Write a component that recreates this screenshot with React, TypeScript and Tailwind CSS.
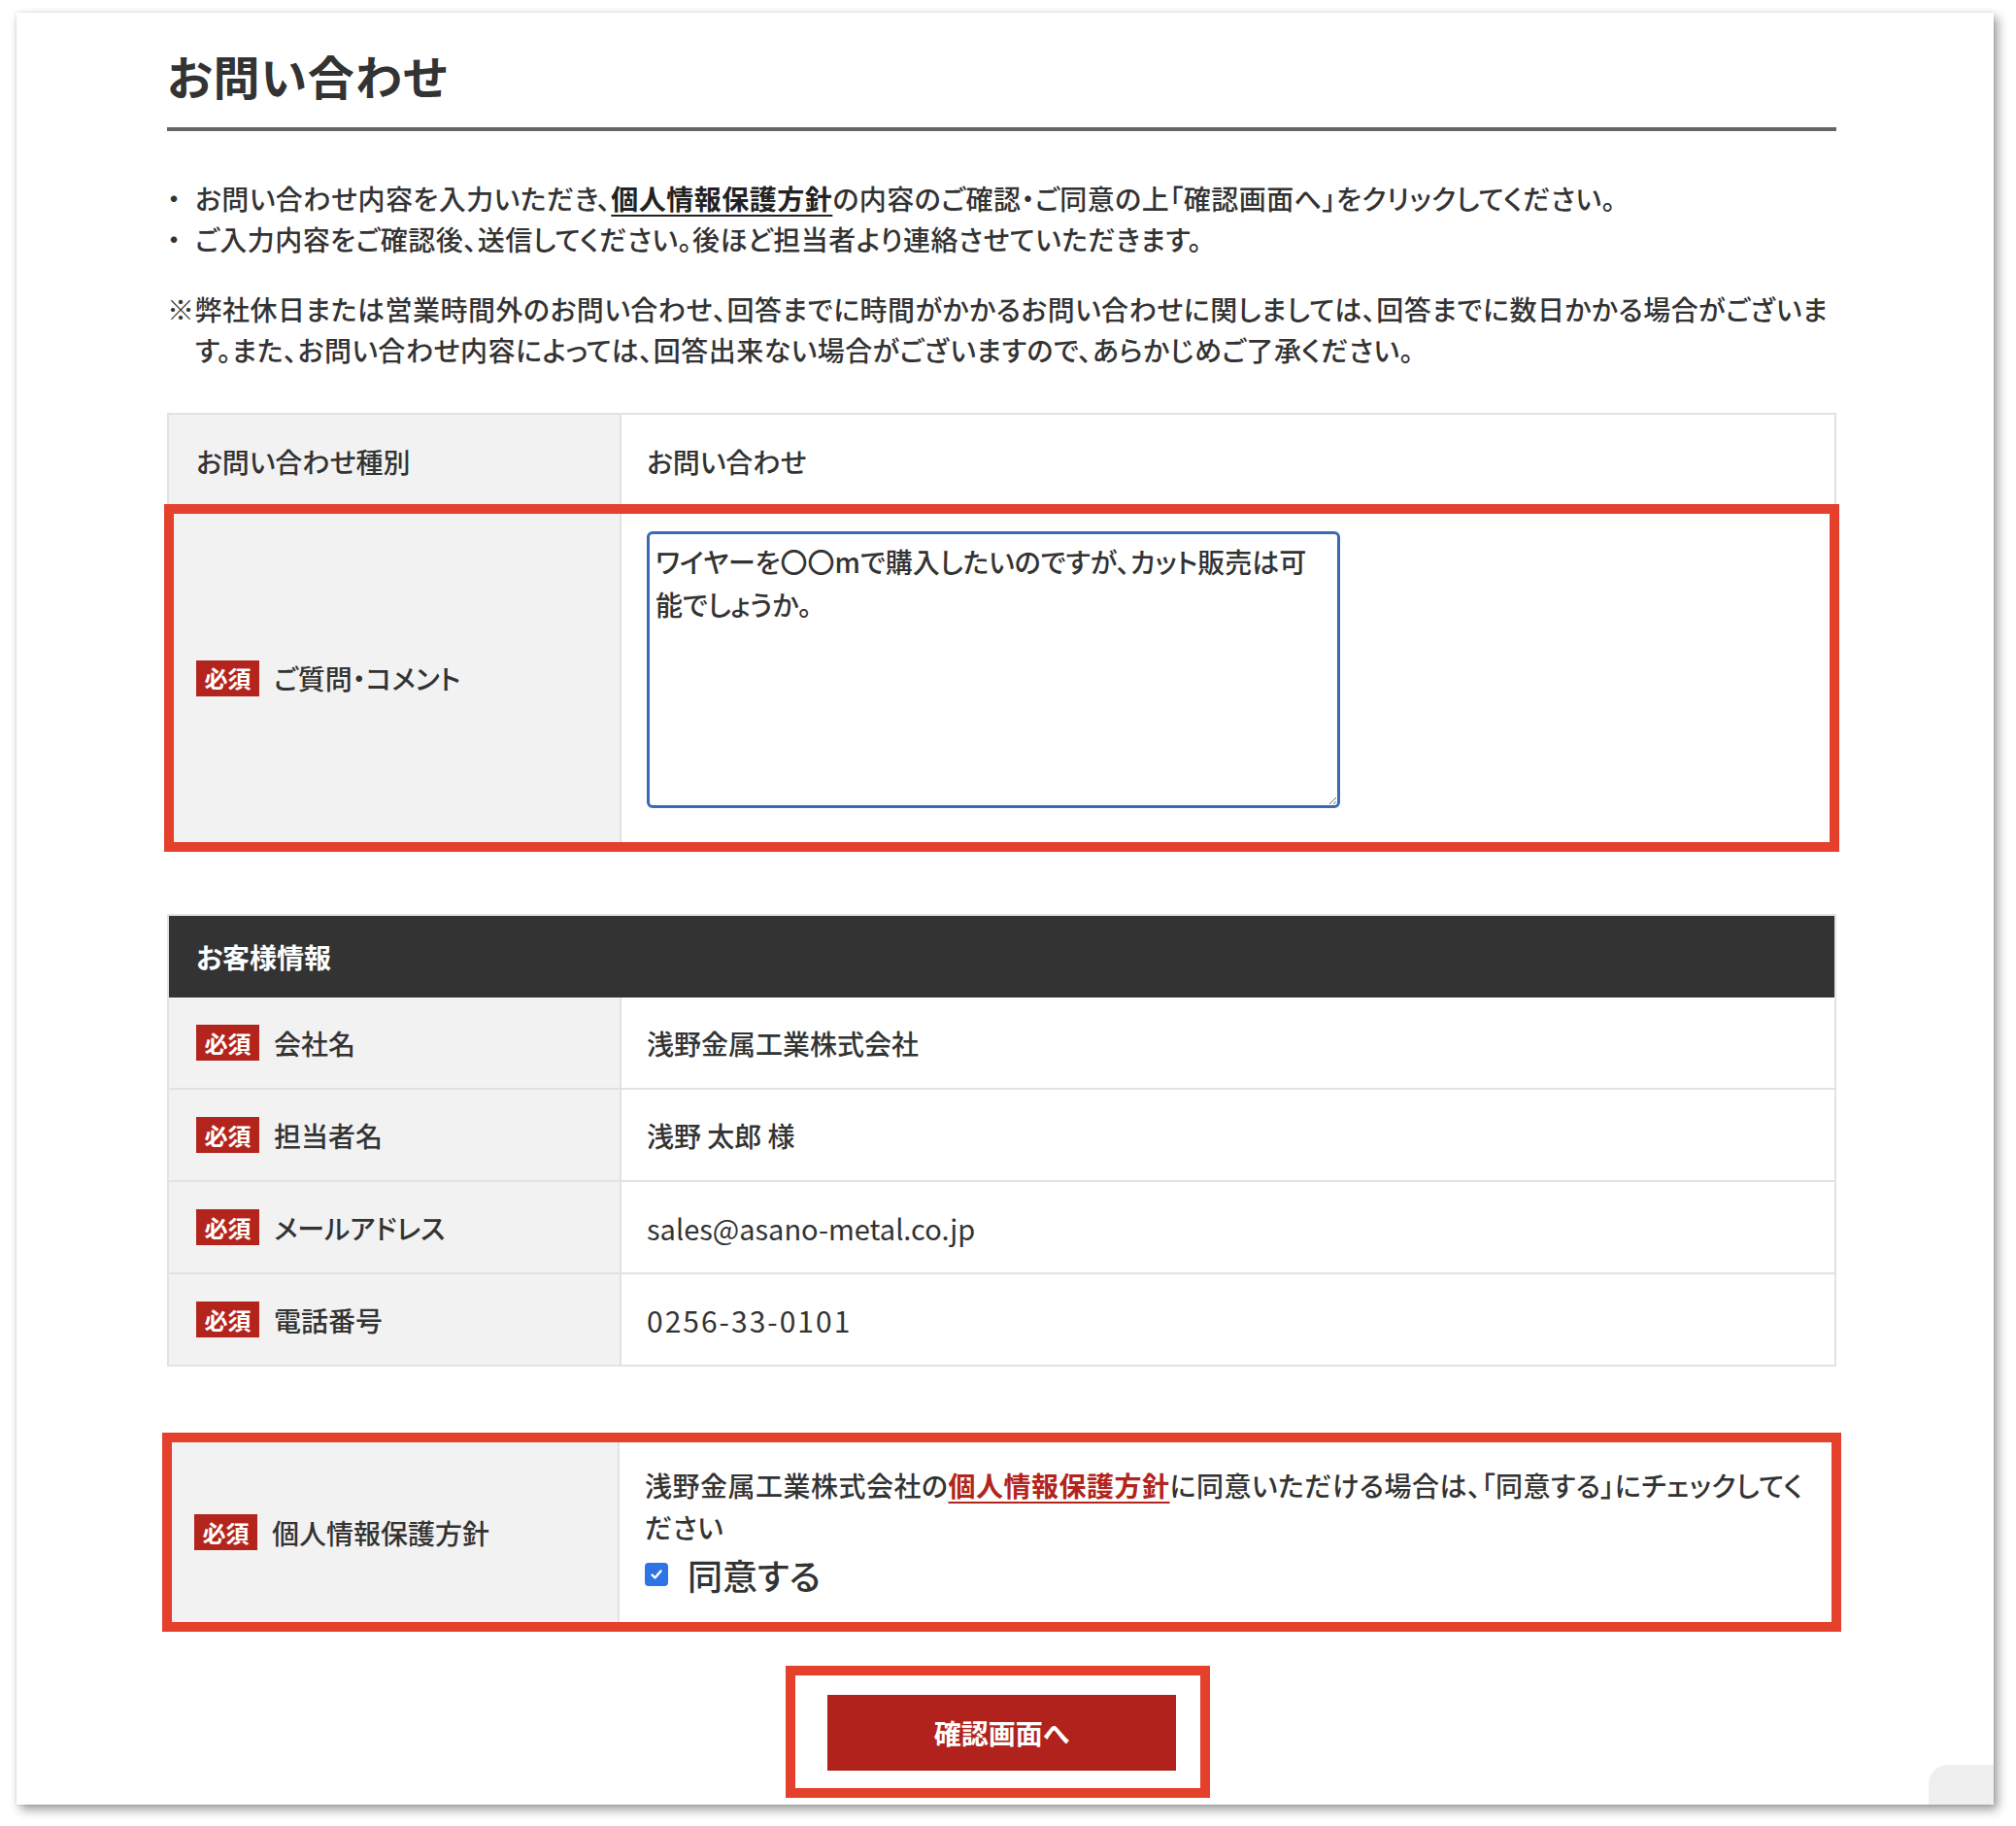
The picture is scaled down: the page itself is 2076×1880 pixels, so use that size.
import React from 'react';

const FRAME = 'outline outline-[10px] outline-[#e4402b] outline-offset-[-5px]';

const Badge = () => (
  <span className="inline-flex h-[37px] w-[65px] shrink-0 items-center justify-center bg-[#b3241c] text-[24px] font-bold leading-none text-white">
    必須
  </span>
);

const Label = ({ text, required = true }: { text: string; required?: boolean }) => (
  <div className="flex w-[466px] shrink-0 items-center gap-[15px] border-r-2 border-[#e2e2e2] bg-[#f2f2f2] pl-[28px]">
    {required && <Badge />}
    <span>{text}</span>
  </div>
);

const customerRows = [
  { label: '会社名', value: '浅野金属工業株式会社', cls: '' },
  { label: '担当者名', value: '浅野 太郎 様', cls: '' },
  { label: 'メールアドレス', value: 'sales@asano-metal.co.jp', cls: 'font-normal text-[29px]' },
  { label: '電話番号', value: '0256-33-0101', cls: 'font-normal text-[30px] tracking-[2px]' },
];

export default function App() {
  return (
    <div className="h-[1880px] w-full overflow-hidden bg-white pl-[17px] pt-[13px] font-['Noto_Sans_CJK_JP','Noto_Sans',sans-serif] font-medium text-[#333] [font-feature-settings:'palt']">
      <div className="relative h-[1845px] w-[2036px] bg-white pl-[155px] pt-[28px] shadow-[0_0_3px_rgba(0,0,0,0.12),4px_5px_10px_rgba(0,0,0,0.4)]">
        <div className="w-[1719px]">
          <h1 className="border-b-4 border-[#666] pb-[18px] text-[48px] font-bold leading-[72px] tracking-[1px] text-[#333]">
            お問い合わせ
          </h1>

          <ul className="mt-[48px] text-[28px] leading-[42px] tracking-[0.5px]">
            <li className="flex">
              <span className="w-[29px] shrink-0">・</span>
              <span>
                お問い合わせ内容を入力いただき、
                <a className="font-bold text-[#222] underline underline-offset-[5px]">個人情報保護方針</a>
                の内容のご確認・ご同意の上「確認画面へ」をクリックしてください。
              </span>
            </li>
            <li className="flex">
              <span className="w-[29px] shrink-0">・</span>
              <span>ご入力内容をご確認後、送信してください。後ほど担当者より連絡させていただきます。</span>
            </li>
          </ul>

          <p className="mt-[30px] pl-[29px] indent-[-29px] text-[28px] leading-[42px] tracking-[0.5px]">
            ※弊社休日または営業時間外のお問い合わせ、回答までに時間がかかるお問い合わせに関しましては、回答までに数日かかる場合がございます。また、お問い合わせ内容によっては、回答出来ない場合がございますので、あらかじめご了承ください。
          </p>

          {/* inquiry */}
          <div className="mt-[44px] border-x-2 border-t-2 border-[#e2e2e2] text-[28px] leading-[42px]">
            <div className="flex h-[97px] border-b-2 border-[#e2e2e2]">
              <Label text="お問い合わせ種別" required={false} />
              <div className="flex flex-1 items-center pl-[26px]">お問い合わせ</div>
            </div>
            <div className={`relative flex ${FRAME}`}>
              <Label text="ご質問・コメント" />
              <div className="flex-1 pb-[40px] pl-[26px] pt-[23px]">
                <textarea
                  className="block h-[285px] w-[714px] rounded-[6px] border-[3px] border-[#3a6ab3] bg-white px-[6px] pt-[6px] text-[28px] leading-[44px] text-[#333] outline-none"
                  defaultValue="ワイヤーを〇〇mで購入したいのですが、カット販売は可能でしょうか。"
                />
              </div>
            </div>
          </div>

          {/* customer */}
          <div className="mt-[69px] border-x-2 border-t-2 border-[#e2e2e2] text-[28px] leading-[42px]">
            <div className="flex h-[84px] items-center bg-[#333] pl-[28px] font-bold text-white">お客様情報</div>
            {customerRows.map((row) => (
              <div key={row.label} className="flex h-[95px] border-b-2 border-[#e2e2e2]">
                <Label text={row.label} />
                <div className={`flex flex-1 items-center pl-[26px] ${row.cls}`}>{row.value}</div>
              </div>
            ))}
          </div>

          {/* privacy */}
          <div className={`mt-[73px] flex h-[195px] text-[28px] ${FRAME}`}>
            <Label text="個人情報保護方針" />
            <div className="flex flex-1 flex-col justify-center pl-[26px] pr-[24px]">
              <p className="leading-[43px] tracking-[0.5px]">
                浅野金属工業株式会社の
                <a className="font-bold text-[#b3241c] underline underline-offset-[5px]">個人情報保護方針</a>
                に同意いただける場合は、「同意する」にチェックしてください
              </p>
              <label className="flex h-[54px] items-center gap-[20px]">
                <span className="flex h-[24px] w-[24px] items-center justify-center rounded-[4px] bg-[#2f74e4]">
                  <svg viewBox="0 0 16 16" className="h-[16px] w-[16px]" fill="none">
                    <path d="M3.5 8.5l3 3 6-7" stroke="white" strokeWidth="2.4" strokeLinecap="round" strokeLinejoin="round" />
                  </svg>
                </span>
                <span className="text-[36px] font-medium">同意する</span>
              </label>
            </div>
          </div>

          {/* submit */}
          <div className="relative mx-auto mt-[70px] w-[359px]">
            <button className="h-[78px] w-full bg-[#b0221b] text-[28px] font-bold text-white">確認画面へ</button>
            <div className="pointer-events-none absolute -bottom-[28px] -left-[43px] -right-[35px] -top-[30px] border-[10px] border-[#e4402b]" />
          </div>
        </div>

        <div className="absolute bottom-0 right-0 h-[41px] w-[67px] rounded-tl-[20px] bg-[#efefef]" />
      </div>
    </div>
  );
}
